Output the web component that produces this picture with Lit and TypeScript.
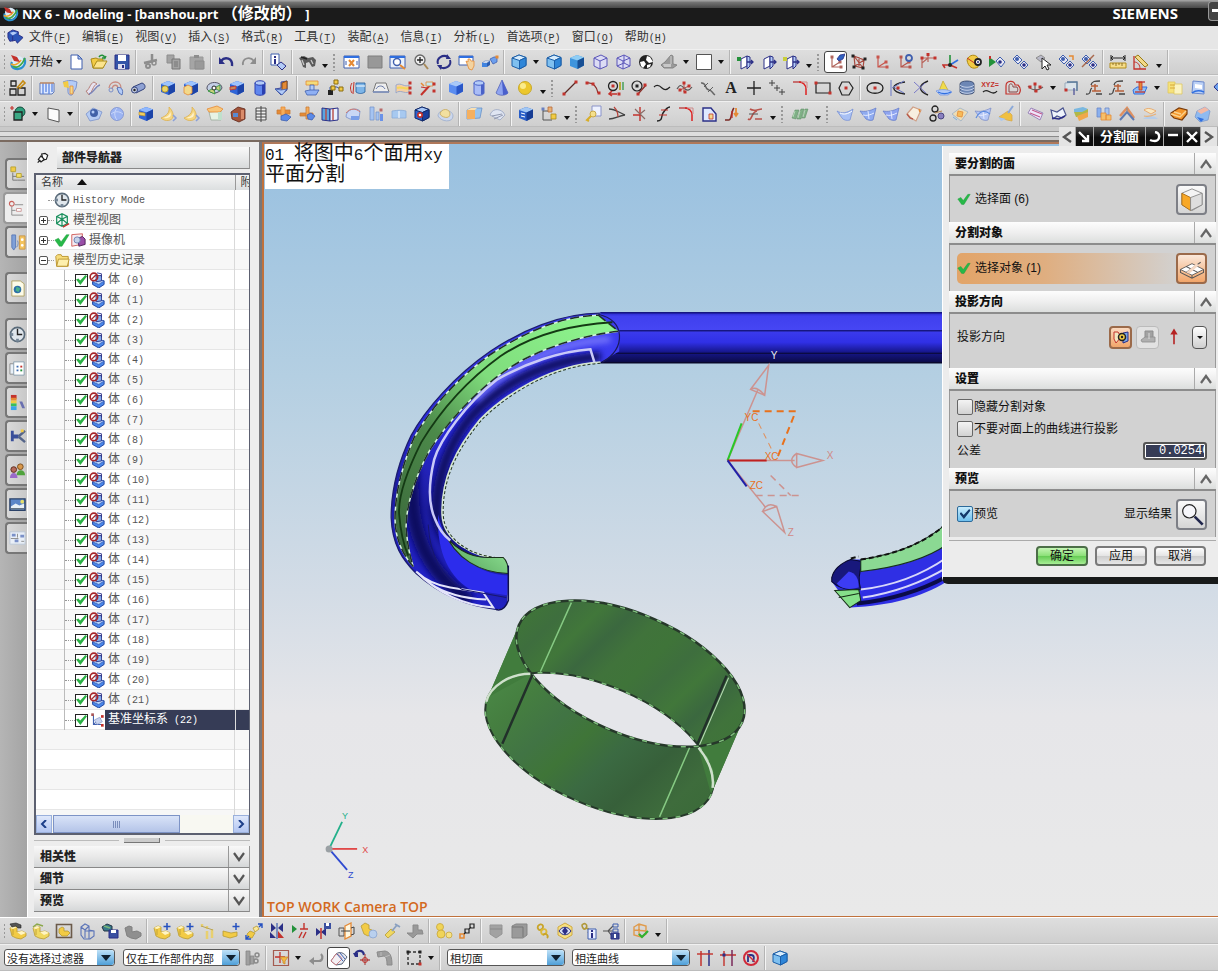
import { LitElement, html, css, svg, nothing } from "lit";
import { customElement, property } from "lit/decorators.js";
import { classMap } from "lit/directives/class-map.js";

/* ---------- icon drawing helpers (18 x 18 grid) ---------- */
const R = "#c3322c", B = "#2f6fe0", Y = "#f2cb45", K = "#222", G = "#23913a", L = "#b3cbf7",
  N = "#2b2f86", O = "#e58a35", A = "#8d8d8d", W = "#fff", D = "#3f5fae";

const p = (d: string, fill = "none", stroke = "none", w = 1) =>
  svg`<path d=${d} fill=${fill} stroke=${stroke} stroke-width=${w}></path>`;
const s = (d: string, stroke = K, w = 1) => p(d, "none", stroke, w);
const c = (x: number, y: number, r: number) =>
  `M${x - r} ${y}a${r} ${r} 0 1 0 ${2 * r} 0a${r} ${r} 0 1 0 ${-2 * r} 0z`;
const cube = (t: string, l: string, r: string, line = "none") => [
  p("M2 5L9 2l7 2.5v8L9.500 16 2 13z", l, line), p("M2 5L9 2l7 2.500L9.500 7.500z", t, line), p("M9.500 7.500L16 4.500v8L9.500 16z", r, line)];
const mini = (x: number, y: number, a: string, b: string) => [
  p(`M${x} ${y + 2}l3-2h5l-3 2z`, W, b, 0.5), p(`M${x} ${y + 2}h5v4h-5z`, a), p(`M${x + 5} ${y + 2}l3-2v4l-3 2z`, b)];
const cyl = (a: string, b: string) => [p("M4 4v10c0 3 10 3 10 0V4z", a, b), p("M11 4v11.500c2-.5 3-1 3-1.500V4z", b), p("M4 4c0-3 10-3 10 0S4 7 4 4z", L, b)];
const dot = (x: number, y: number, k = R) => p(`M${x - 1.500} ${y - 1.500}h3v3h-3z`, k);
const gear = (k: string, e: string) => [
  p("M1 6l4-2 3 1v5l5-1 4 2v3l-5 3-5-1-4-2z", k, e, 0.8), p("M1 6l4-2 3 1-4 2z", "#fff5c4"), p("M8 10l5-1 4 2-5 2z", "#fff5c4"), s("M4 7v6", e, 0.8)];
const grayGear = p("M1 6l4-2 3 1v5l5-1 4 2v3l-5 3-5-1-4-2z", "#8f8f8f", "#808080");
const axes = (k: string) => [s("M5 3v11h10M5 14l8-5", k, 1.200), dot(5, 4, k), dot(14, 14, k), dot(13, 9, k)];
const surf = (k: string, e: string) => [p("M1 6c5 1 10 0 16-3l-3 12c-3 1-5 0-7-1z", k, e, 0.8), s("M4 10c4 1 7 0 11-2M9 6l1 8", "#e4ebff", 1)];
const eye = (k: string) => [p("M2 6l4-4 5 5-4 4z", "#e8e8f4", D), p(c(6, 6, 2), D), p("M9 12l4-4 4 4-4 4z", "#e8e8f4", D), p(c(13, 12, 1.800), N), s("M12 3h4v4", k, 1.500)];
const wall = (k: string) => [p("M5 6l6-3v10l-6 3z", W, N), p("M11 3l3 1v9l-3 3z", L, N), s("M11 9h6M15 7l2 2-2 2", N, 1.300), p("M1 4h4v4H1z", k)];

const ICONS: Record<string, unknown> = {
  nx: [p(c(9, 9, 6), "#dcecf8"), s("M15 5c3 5-1 12-8 11C2 15 2 11 3 9", "#2a8fd0", 2.200), s("M4 13c5 4 10-3 12-8", "#45a845", 1.800), s("M2 11c3 2 8 0 10-4", "#f0a52a", 1.600), p("M2 2l6 2 3 5-6-1z", R)],
  nxs: [p("M1 4l5-3 6 2v3l5 3-6 6-2-3-6 1-2-4z", "#2c55b8", N), p("M3 4l4-1 4 1-5 3z", L), s("M6 7v6", N)],
  new: [p("M4 2h7l4 4v10H4z", W, D), p("M11 2v4h4z", L, D)],
  open: [p("M1 6l5-1 2 1h5v9H3z", Y, "#a88a1a"), p("M3 15l4-7h10l-4 7z", "#fbe48d", "#a88a1a"), s("M9 4c2-3 5-2 6 1l1-2M15 5h-3", G, 1.500)],
  save: [p("M2 2h14v14H2z", "#3555a8", N), p("M5 2h8v6H5z", W), p("M5 11h7v5H5z", "#dde"), p("M9 12h2v3H9z", N)],
  cut: [s("M10 1v9M2 10l13-3", A, 2.500), s(c(6, 13, 2), A, 2), s(c(12, 10, 2), A, 1.500)],
  copy: [p("M2 2h7v8H2z", "#a3a3a3", A), p("M7 6h8v10H7z", "#a3a3a3", "#777"), s("M9 9h4M9 11h4M9 13h4", "#777")],
  paste: [p("M2 4h13v12H2z", "#a5a5a5", "#999"), p("M6 2h5v3H6z", A), p("M7 8h9v8H7z", "#999", A)],
  undo: [s("M4 8c4-5 12-3 11 5", N, 2.400), p("M2 4v7h6z", N)],
  redo: [s("M14 8C10 3 2 5 3 12", A, 1.800), p("M16 4v7h-6z", A)],
  info: [p("M2 1h8v11H2z", W, D), p("M5 3h2v2H5zM5 6h2v5H5z", N), p("M8 12l4-3 5 4-4 4z", L, N)],
  find: [p("M1 5l5-2 4 2 5-1 3 3-1 6-3 1-3-5-3 1 0 5-3-1-2-6z", "#5a5a5a"), s("M4 7l2 5M13 7l2 4", "#c8c8c8", 1.300), s("M3 4l6 2", K, 1.500)],
  fit: [p("M1 3h15v12H1z", W, D), p("M1 3h15v2H1z", B), s("M6 7l5 6M11 7l-5 6", O, 2), s("M3 8v4M14 8v4", D)],
  gray: [p("M2 3h14v12H2z", "#989898", "#7f7f7f")],
  zoomfit: [p("M1 3h15v12H1z", "#eaf1fb", D), p("M1 3h15v2H1z", B), p(c(8, 9, 3.500), W, D, 1.400), s("M11 12l5 4", O, 2)],
  zoom: [p(c(8, 7, 5), "#eee", "#666", 1.300), s("M5 7h6M8 4v6", K, 1.300), s("M12 11l4 5", "#a88a5a", 2)],
  rotate: [s("M3 11C1 5 8 1 13 4M15 7c2 6-5 10-10 7", N, 2), p("M12 1l4 5h-5zM6 17l-4-5h5z", N)],
  pan: [p("M1 3h14v9H1z", W, D), p("M1 3h14v2H1z", B), p("M8 8l2 1V6h2l1 2 3 0v5l-2 4-3-1z", "#f3d3a0", O, 0.800)],
  persp: [...mini(1, 8, "#3f83e0", "#2a5cb0"), p("M9 6l4-2h3v5l-4 2z", "#6c9fee", D, 0.800), dot(16, 4, O)],
  cubeB: cube("#d7ecfc", "#7fc0f0", "#2f86d8", "#1b5ea8"),
  cubeS: cube("#a9c9f8", "#5b8df0", "#2a57c8"),
  solid: cube("#8fcdf5", "#3f95dd", "#174f94"),
  wire: [p("M3 5l7-3 6 3v8l-7 3-6-3z", "#dcdcf4"), s("M3 5l7-3 6 3v8l-7 3-6-3zM3 5l6 3 7-3M9 8v8", "#5a55b8", 1)],
  wire2: [p("M3 5l7-3 6 3v8l-7 3-6-3z", "#dcdcf4"), s("M3 5l7-3 6 3v8l-7 3-6-3zM3 5l6 3 7-3M9 8v8M10 2v8l-7 3M10 10l6 3", "#5a55b8", 1)],
  yin: [p(c(9, 9, 7), K), p("M10 3l3 1 3 5-4 1-3-3z", W), p("M3 9l4-1 2 3-3 4-2-2z", W), p("M10 12l4-1-1 3-3 1z", W)],
  section: [p("M5 9l6-7 2 1v8l4 1-4 3H4l-3-3z", "#9a9a9a", "#858585"), p("M3 11h8v3H4z", "#c8c8c8"), s("M11 3v8", "#ccc")],
  square: [p("M1.500 1.500h15v15h-15z", W, "#555")],
  clip1: wall(G), clip2: wall("none"), clip3: wall("#c9cf3a"),
  csysSet: [...axes("#b0655c"), p("M10 6l3-4 5-1-2 5-4 2z", "#2f62c0", N, 0.800)],
  csysDots: [s("M4 3l10 4-1 8-8-2zM4 3l9 12M14 7L5 13M9 4v9", "#a84a40", 1.200), dot(3, 3, K), dot(15, 6, K), dot(13, 15, K), dot(4, 14, K)],
  csys: axes("#c8554c"),
  csysRot: [...axes("#b8554c"), s(c(13, 5, 3), D, 1.800)],
  csysDir: [s("M3 15V5h13M9 1v8M3 10l6-5", "#b9655c", 1.200), dot(3, 5), dot(9, 1.500), dot(16, 5)],
  csysRgb: [s("M8 2v11", G, 1.600), s("M8 12l8-5", B, 1.600), s("M8 12H1l2 3M8 12l7 3", R, 1.600), p(c(8, 12, 2), K)],
  ball: [p("M2 7c2-6 9-6 11-2v9c-5 3-10 0-11-7z", Y, "#b08a10"), s("M2 5l9 6", R), p(c(13, 9, 3), W, K, 1.800), p(c(13, 9, 1), N)],
  play: [p("M1 4l7 5-7 5z", G), s("M2 3v3", R, 2), p("M8 8l4-4 5 5-4 5z", "#e8e8f4", D), p(c(12, 9, 1.800), N)],
  eye1: eye("none"), eye2: eye(O), eye3: [...eye("none"), s("M2 14l12-12", "#a8684c", 1.400)],
  eyePtr: [p("M2 5l5-3 4 3-4 4z", "#b9b9c8", A), p("M8 5v11l3-3 2 4 2-1-2-4h4z", W, K)],
  measure: [s("M2 2v6M16 2v6M2 5h14M4 3L2 5l2 2M14 3l2 2-2 2", K), p("M1 10h16v5H1z", "#f6dd8a", "#b38d1c"), s("M4 10v2M7 10v3M10 10v2M13 10v3", "#7a5c14", 0.8)],
  angle: [s("M2 3v13h12", R, 1.300), p("M3 4l3-2 10 10-3 2z", "#f3d98a", "#9a7c14"), s("M2 9c4 0 6 3 6 7", R)],
  sketch: [s("M2 2h5v5H2zM1 10h6v6H1zM9 9h7v7H9z", K, 1.300), s("M8 9l6-7 2 2-6 6", "#c78b10", 1.600)],
  extrude: [p("M2 4h14v9l-2 2H2z", "#dfe9ff", D, 0.800), s("M5 4v11M8 4v9M11 4v11M14 4v9", "#5b86e0", 1.300), s("M2 4h14", O)],
  revolve: [p("M2 3c5-2 9-2 14 0l-1 6-4 7c-5 1-4-5-4-7z", L, "#7a92cc"), p("M2 3l5-1 1 7-5-1z", Y), p("M9 7h3v8H9z", "#f3d98a", O, 0.8)],
  sweep: [p("M2 12c3 0 4-8 8-9l6 3c-5 0-6 9-10 10z", "#e6e2f0"), s("M2 12c3 0 4-8 8-9l3 2c-4 1-5 9-8 11z", "#b58078"), s("M5 15c5-1 6-8 11-9", "#7b86b8", 1.300)],
  tube: [s("M2 9c1-8 12-8 12 0M5 10c1-5 6-5 6 0", "#c88a80", 1.300), s(c(4, 11, 2), "#7b8fc8"), p("M10 9c4-2 7 2 5 7l-3-2z", L, D, 0.800)],
  pipe: [p("M3 8l9-4c3 1 4 4 2 6l-8 4z", "#8fa2d4", "#33437c"), p(c(4.500, 11, 3), "#c4cde4", "#33437c"), p(c(4.500, 11, 1.200), K)],
  cubeY: [...cube("#9cc4ff", "#2f65d8", "#1c44a8"), p(c(6, 10, 3.200), "#ecd66a", "#a88a1a", 0.800)],
  cubeY2: [...cube("#9cc4ff", "#2f65d8", "#1c44a8"), p("M2 8l4-2 4 2v6l-4 2-4-2z", "#f3d98a", O, 0.8)],
  disk: [p("M2 10C1 2 16 1 17 9c-3 6-11 7-15 1z", "#c4cfe6", "#556"), p("M9 9l6-3v6zM9 9l-6 3 7 3z", "#c9d27a", G, 0.800), p(c(9, 9, 2), W, K)],
  cubeO: [...cube("#9cc4ff", "#2f65d8", "#1c44a8"), p("M2 8l6-1v3l-6 1z", "#c98a5a", R, 0.8)],
  cyl: cyl("#5f86ee", "#2a3fb0"),
  corner: [p("M1 10l6-1V3l6-1v9l-6 5z", "#7b9be6", N, 0.800), p("M8 4l5-2v8l-5 3z", O, "#8a4d14"), p("M1 10l6 1 6-1-5 6z", L, D, 0.800)],
  pad: [p("M3 2h12v4H3z", "#f3dc7a", O, 0.800), p("M7 6h4v6H7z", L, D, 0.800), p("M2 12l5-1h9l-3 5H4z", "#8fb0f4", D, 0.800)],
  cubes: [s("M4 14V8h7l4 3", D), p("M8 1h4v4H8z", Y, "#8a6d10"), p("M2 11h5v5H2z", K), p("M13 8h4v4h-4zM5 7h4v4H5z", Y, "#8a6d10")],
  slab: [s("M3 4c-2 3-2 7 0 10M5 3l-1 12", R), p("M7 4h9v9c-3 2-6 2-9 0z", "#7db5e8", "#1e5a9a", 0.800), s("M7 7h9", W)],
  trap: [p("M4 4h10l3 9H1z", "#eee", "#777"), s("M4 10c2-4 7-4 9 0", "#6a7aa8"), s("M1 13h16", "#7a8fc0", 1.500)],
  band: [p("M1 6c5-3 9 3 13 0v7c-5 2-9-3-13 1z", "#f6cfa4", "#8aa0cc", 0.800), s("M2 9c5-2 8 2 12 0", "#f4d65a", 2), dot(15, 4), dot(15, 9), dot(15, 14)],
  hook: [s("M3 16L14 4", R, 2), s("M3 8l6 1", R, 1.200), p("M8 3h7v4H8z", "#bfe8f2", O, 0.800), dot(16, 5), dot(16, 12), s("M3 4l3 3", O, 1.500)],
  cone: [p("M9 1l6 13c-3 3-9 3-12 0z", "#8fa4f0", "#5565b8", 0.800), p("M9 1l6 13c-1 1-3 2-5 2z", "#4a60cc")],
  cylL: cyl("#a9bcf6", "#4a62c8"),
  sphere: [p(c(9, 9, 6.500), "#ecc72c", "#c8aa2c"), p(c(7, 7, 3), "#faeb8a")],
  line: [s("M3 15L15 3", "#5a2a24", 1.300), dot(3, 15), dot(15, 3)],
  arc: [s("M3 4c6-1 10 4 11 10", "#8a2f2a", 1.400), dot(3, 4), dot(9, 5), dot(15, 14)],
  circs: [s(c(6, 7, 4.500), K, 1.300), dot(6, 7), s("M2 15h8M5 12l-3 3 3 2", R, 1.500), s("M13 3v8", "#b8a83a", 2), s("M16 3v8", G, 1.200), dot(12, 15)],
  circl: [s(c(7, 7, 5), K, 1.200), s("M8 15l8-9", "#8a2f2a", 1.400), dot(15, 6), dot(8, 15), dot(7, 7, K)],
  wave: [s("M1 8c3-3 6-1 8 1s5 2 8-1", K, 1.200)],
  studio: [s("M1 10c3-5 4-4 7-1s5 3 8-1", "#555", 1.200), s("M8 4v9M4 11l9-4", "#b8524c"), dot(8, 4), dot(4, 11), dot(13, 7), dot(9, 13)],
  scurve: [s("M2 4c6-1 3 6 8 7 3 0 3 3 6 5", "#666", 1.400), s("M5 8l4-4M9 13l5-5", "#444", 0.800)],
  letter: svg`<text x="9" y="14" text-anchor="middle" font-family="Liberation Serif, serif" font-weight="700" font-size="16" fill="#222">A</text>`,
  plus: [s("M9 2v14M2 9h14", K, 1.300)],
  points: [s("M4 1v6M1 4h6M9 6v6M6 9h6M14 10v6M11 13h6", "#444", 1)],
  fillet: [s("M2 3h8", "#b33", 1.300), s("M8 3c4 0 7 3 7 7v6", "#d22", 1.500), s("M10 3h6v6", "#c88", 1)],
  rect: [s("M2 4h14v10H2z", K, 1.200), dot(2, 4), dot(16, 14)],
  poly: [s("M5 3h7l4 6-4 7H5L2 9z", K, 1.200), dot(9, 9)],
  ellipse: [s("M1 9c0-7 16-7 16 0s-16 7-16 0z", K, 1.300), dot(9, 9)],
  parab: [s("M16 3C1 5 1 13 16 15", K, 1.400), s("M2 1v16M3 9l12-7M6 9l9 5", "#6a78c8"), dot(9, 9)],
  hyper: [s("M16 2C6 6 6 12 16 16", K, 1.400), s("M2 3l12 11M2 14L13 4", "#7a7ac8", 1)],
  helix: [p("M4 12l4-10 6 11z", "#f0dc4a", "#c4a83a", 0.800), p("M1 12c4-2 12-2 16 1l-4 3H5z", L, "#7a98e0", 0.800), s("M3 13c4 2 9 2 13 0", B, 1.200)],
  coil: [p("M2 5c0-4 14-4 14 0v8c0 3-14 3-14 0z", "#6d87b5", "#2d3f66", 0.800), s("M2 6c3 3 11 3 14 0M2 9c3 3 11 3 14 0M2 12c3 3 11 3 14 0", "#c5d2ea", 1)],
  xyz: [svg`<text x="9" y="8" text-anchor="middle" font-family="Liberation Sans, sans-serif" font-weight="700" font-size="7" fill="#c3322c">XYZ=</text>`, s("M2 13c3-3 5-1 7 0s5 2 7-1", K, 1.300)],
  offset: [s("M2 15V7c0-6 9-6 9-1h3c3 3 3 6 1 9z", R, 1.200), s("M5 13V7c0-3 4-3 4 1h4c1 2 1 3 0 5z", "#844")],
  joint: [s("M1 7c4 5 10 5 15 1M8 4v9", "#666", 1.200), dot(3, 8), dot(9, 12), dot(8, 5), dot(13, 8)],
  proj: [p("M3 4l12-1v8H3z", "#dbe4ea", "#9ab"), s("M5 3h10v9", "#5a7a9a", 1.400), s("M12 9v7", N), dot(4, 11)],
  inter: [s("M1 15c6 1 3-5 6-6M15 2c-5 0-8 0-9 4M11 15h6", "#444", 1.300), s("M10 5v7M6 7h7M7 12h9", "#b8603a", 1.500)],
  tower: [p("M2 11l4-3h10l-3 7H3z", "#8fc0f5", B), p("M8 3h3v8H8z", O, R, 0.800), s("M4 13h10", R, 1.300), s("M5 3h9", R, 1.300)],
  layers: [p("M2 3h7v11H2z", "#f6e27a", "#e0c860", 0.800), p("M8 5h8v10H8z", "#fbf3c0", "#e0c860", 0.800), s("M4 6h5M4 9h5", "#d8a83a")],
  doc: [p("M4 2l11 1v12l-12-1z", "#bcd1f6", "#6a88cc"), p("M6 5l7 1v4l-7-1z", W), s("M3 14c4-3 7-3 12-1", B, 1.500)],
  more: [p("M2 8c4-6 10-6 13 0l-6 7z", "#6aa0ee", N)],
  boolean: [p(c(11, 7, 5), "#2e9f7c", "#134a3a"), p("M5 7h8v8H5z", "#3aa884", K, 1.300), s("M1 3h4M3 1v4", R, 1.200)],
  plane: [p("M4 3l11 2v12L4 14z", "#fbfbfb", "#555")],
  disc: [p("M1 9l7-6 9 4-3 7-9 2z", "#b5cbf3", "#7a92cc", 0.800), p(c(9, 8, 4), "#4060a8"), p(c(8, 7, 1.500), L)],
  orb: [p(c(9, 9, 6.500), "#9cb4f2", "#7a8fd0", 0.800), s("M3 9c4-3 8-3 12 0M9 3c-3 4-3 8 0 12", "#c8d6fa", 1)],
  block: [...cube("#8fb8ff", "#2f65d8", "#1c44a8"), p("M2 7l6 1 0 3-6-1z", "#f0d060", "#c1912a", 0.600)],
  horn: [p("M9 2c1 6-3 9-8 11 4 4 11 3 12-1 1-4-2-8-4-10z", "#f5d680", "#dcb050", 0.800), p("M3 13c4-1 7-3 7-6 2 3 1 7-7 6z", "#fdf1cc"), s("M13 10l3 3-3 3", "#8aa0d8", 1.500)],
  boxT: [p("M3 7l12-1v9H5z", "#e7f3e4", "#9aaa9a", 0.800), p("M1 4l10-3 6 3-3 3H3z", "#f8c77a", O, 0.800), p("M12 7h4v8h-4z", "#bfe0cc")],
  clamp: [p("M2 7l7-5 7 2v10l-6 3-7-3z", "#a2543a", "#5f2517", 0.800), p("M4 8h5v4H4z", "#5a8ad0"), p("M12 5h3v9h-3z", "#d98b6a")],
  rings: [p("M4 2h10v14H4z", "#eee"), s("M4 3h10M4 6h10M4 9h10M4 12h10M4 15h10M9 1v16M4 3v12M14 3v12", "#444", 1)],
  crossO: [p("M2 5h13v4H2z", O, "#c87c38", 0.800), p("M6 2h4v9H6z", "#f6ac5a", O, 0.800), p("M6 11l5-2 5 3-4 4-6-1z", "#5b8ae8", D, 0.800)],
  crossB: [p("M2 8h13v3H2z", O, "#c87c38", 0.800), p("M8 2h3v12H8z", "#f6ac5a", "#c87c38", 0.800), p("M9 10l4-2 4 3-3 4-4-1z", "#5b8ae8", D, 0.800)],
  book: [p("M1 3l8 1v12l-8-1z", "#5ba5e0", N), p("M17 3L9 4v12l8-1z", "#e8f0ff", N), s("M5 4v11M12 4v11", "#b84a44", 1.400)],
  shell: [p("M2 12C2 4 12 2 16 6l-1 8H6z", "#c9d7f5", "#7a8fc8", 0.800), s("M2 8c4-5 10-5 14-1", "#d07a70"), p("M7 11h8v4H7z", "#7a9ee8")],
  cols: [p("M3 2h4v13H3z", "#a5c4f2", "#7a98cc", 0.800), p("M9 7h3v8H9z", "#a5c4f2", "#7a98cc", 0.800), p("M13 9h3v7h-3z", "#6a92e8"), dot(14, 5, "#b86a6a")],
  pill: [p("M2 6c6-1 10-1 14 0v7H2z", "#a7c9f0", "#8aacd8", 0.800), s("M9 6v7", W)],
  mark: [...cube("#a8c8f8", "#2b62cf", "#1a3f9c", "#122a6a"), p(c(7, 10, 3), R), p(c(7, 10, 1.300), W)],
  disc2: [p("M2 11c0-8 15-7 15 0s-12 6-15 0z", "#ccd8ee", "#9aaccc", 0.800), p("M4 9c1-6 10-6 10 0s-9 3-10 0z", "#f2e0a0", "#c8a85a", 0.8)],
  brick: [p("M2 5l4-2h11l-2 10-13 1z", "#9ac4ee", "#6a92c8", 0.8), p("M2 5h8v9H2z", "#f5b060"), p("M2 5l4-2h6l-2 2z", "#fbe0b0")],
  ghost: [p("M2 10c2-6 8-7 13-3l2 3-5 5z", "#dfe5f2", "#98a4c0", 0.800), s("M4 11l10-2M6 14l9-4", "#8890a8", 0.900)],
  cubeN: [...cube("#a2c8f5", "#2a5fc8", "#173c93"), s("M4 8l4 1M4 11l4 1", "#fff")],
  tree: [s("M3 3v12h9M3 6h5", "#555"), p("M8 2h4v5H8z", "#e8b074", "#b86a3a", 0.800), p("M11 9h5v5h-5z", Y, "#a88a1a", 0.800), dot(3, 4, "#6a80c0")],
  key: [p("M7 1h9v10H7z", "#eef2ff", "#8a93c8"), p(c(8, 9, 3), "#f5e08c", "#c8a84a"), s("M6 11l-4 4 2 1", "#d8ae28", 2)],
  trim: [s("M1 4c6 0 9 3 16 6M1 14c6 0 9-3 16-4", "#444", 1.300), s("M6 2c3 3 4 6 4 10", "#b8423a", 1.200)],
  tick: [s("M9 2v14M2 10h8", R, 1.400), s("M4 4l10 10M9 9l5-4", "#8a6a64", 1.200)],
  bend: [s("M3 16c6 0 4-5 6-8s4-6 7-6", K, 1.400), s("M5 10h8M7 5h7", R, 1)],
  sheet: [p("M3 3h8l5 6v7H3z", "#dfe9ff", N, 1.400), p("M9 9h4v5H9z", "#f3d98a", R, 0.800)],
  stair: [s("M2 15h4c3 0 2-9 5-12", "#7a2a24", 1.700), s("M13 3v8M11 8l2 3 2-3", O, 1.800), s("M9 13V6", R, 1.300)],
  spin: [s("M4 4c4 3 8 0 12 0M2 14c4 3 3-7 9-8M9 14h7", "#b8524a", 1.600), s("M3 9h9", "#555")],
  greens: [p("M1 13l3-8h4l-3 9zM6 14l4-10h3l-3 10zM11 13l3-9h3l-3 9z", "#7fb086", "#5a8a60", 0.5), s("M4 6l-2 6M9 6l-2 7M14 5l-2 7", "#b5d6b8")],
  sf1: [p("M1 6c5 3 10 2 16-2l-3 11c-3 1-7 0-8-2z", "#a8c0f4", "#7a92d4", 0.8), s("M4 8c4 2 8 1 12-2", W)],
  sf2: surf("#8fabf0", "#6a80cc"), sf3: surf("#8fa4f0", "#6a80cc"),
  diamond: [p("M2 9l6-7 8 3-5 11-5-3z", "#f7efe0", "#cfa088", 1.200), s("M2 9l3 4 3 1", "#b85a4a", 1.400), s("M14 4l1 3", O, 1.500)],
  loops: [s(c(7, 4, 3), K, 1.300), s(c(5, 13, 3), K, 1.300), p(c(13, 11, 3), "#8a80c0", "#4a4680"), s("M7 8l7-2", "#b88a5a", 1.300)],
  patch: [p("M1 9l8-6 8 4-7 9z", "#eeddb4", "#9ab0c8", 0.800), p("M7 6l5 1-1 5-5-1z", "#f6bb58", O, 0.800), s("M2 12l4 3", "#7ab0d8")],
  net: [...surf("#b5c6f5", "#8090c8"), s("M2 13c4-8 9-8 14-4", "#5b8ae0", 1.200)],
  broom: [p("M2 12l9-6 4 4v6l-5-1z", "#f0c040", "#d8a84a", 0.800), s("M11 8l5-7", "#8aa8d8", 2), p("M1 12l8 2-5 2z", "#a8c8f0")],
  roll: [p("M2 8l3-5 12 5-3 7z", "#eee4fa", "#9a86b8", 1), s("M4 8l10 4M6 5l10 4", "#c05a8a", 1.100)],
  wing: [p("M2 5l6 2 6-4 3 7-4 3-5-2-4 3z", "#eef3fb", "#4a5490", 1.200), s("M3 13l7 1 6-3", N, 1.500)],
  stack: [p("M2 4l9-2 5 2-3 3H2z", "#7ab8e0"), p("M2 7h8l6-3v4l-5 4H4z", "#b0b848"), p("M5 11l11-4v5l-9 4z", "#f0a84c")],
  posts: [p("M2 3h4v9H2z", "#8ab0ee", "#6a88c8", 0.800), p("M10 3h4v7h-4z", "#a8c4ee", "#6a88c8", 0.800), p("M6 8h5v7H6zM11 10h5v5h-5z", "#f5c06c", O, 0.800)],
  roof: [s("M2 11l7-8 7 10", "#e09060", 2.500), s("M2 15l7-8 7 8", "#5f7ab0", 2), s("M9 3v4", A)],
  dune: [p("M3 5c4-3 8-1 12 1l-5 3z", "#f8e8c4", O, 0.600), p("M2 14c4-4 11-4 15 0z", "#b5cdea"), s("M3 11c4 1 8 0 12-2", "#e8b074", 1.200)],
  gold: [p("M1 8l8-5 8 2v4l-5 6-8-2-3-3z", "#f3952a", "#7c3c0a", 1.200), s("M1 9l9 3 6-6M4 7l7 2", "#fbd28e", 1.500)],
  blueS: [p("M4 6l8-4 5 4-2 9-8 2-5-5z", "#8fbaf0", "#7a98cc", 0.800), p("M4 6l8-4 4 3-8 4z", "#f2b9a6"), p("M4 12l7 2-3 3z", B)],
  as1: [...gear(Y, "#b89a34"), p("M1 2l6-1 5 2 0 3-3 0-2-2-4 1z", "#555", K, 0.600)], as2: [...gear("#f0d860", "#b89a34"), s("M1 5l4-3 6 2", "#8aa84a", 1.400)],
  as3: [s("M1.500 2.500h15v13h-15z", "#6b5a4a", 1.600), p("M4 7l3-2 2 1v3l4 0 2 2-3 3-5 0-3-3z", Y, "#b89a34", 0.800)],
  as4: [s("M3 5l4-3 4 2v4l5 1v5l-4 3H6l-3-4zM3 5l4 3v8M7 8l4-4M7 9h9M11 8v9", "#5b74b8", 1.100)],
  as5: [p("M1 5l5-3 5 2v5H3z", "#3a7a8a", "#234"), p("M8 8h9v8H8z", "#3a4fa0", N), p("M10 8h5v3h-5z", W), s("M3 4l6 2", "#7ab87a", 1.500)],
  asG: grayGear,
  asPlus: [...gear(Y, "#b89a34"), s("M14 1v7M10.500 4.500h7", "#2450c0", 1.500)],
  asDots: [s("M3 2v3M8 4v3M8 9v8M13 7v9", "#e8d070", 2.500), s("M2 4l12 4", "#b8a45a")],
  asFlat: [p("M1 9l8 2 6-1v4l-7 2-7-2z", Y, "#b89a34", 0.800), s("M14 1v7M10.500 4.500h7", "#2450c0", 1.500)],
  asMove: [p("M2 12l3-3 5 2-3 5-4-1z", Y, "#b89a34", 0.800), p("M8 6l4-2 2 3-4 3z", "#fbe99a", "#b89a34", 0.800), s("M13 2h4v4M1 13v4h5M17 2l-3 3M1 17l3-3", "#2450c0", 1.400)],
  mate: [p("M3 1l5 5-5 4zM15 1l-5 5 5 4z", N), s("M9 1v16", D, 1.200), p("M10 9l6 7h-6z", R), p("M2 10l6 6H2z", N)],
  cons: [p("M1 3l5 4-5 4z", G), s("M9 7h8M13 1v6M8 16l3-6M12 16l3-6", R, 1.400)],
  savem: [p("M2 6l5 4-5 4zM12 6L7 10l5 4z", N), s("M7 6v11", R, 1.500), p("M10 1h7v6h-7z", "#3a4fa0"), p("M12 1h3v3h-3z", W)],
  mir: [s("M2 6h5v8H2z", "#555"), p("M8 4l6-3v13l-6 3z", "#fff7e0", O, 1.300), s("M14 6l3-1v7l-3 1M4 9h9", "#444")],
  wav: [p("M1 4l4-3 4 2v4l3 1v4l-4 2-4-2z", Y, "#b89a34", 0.800), p(c(13, 12, 4), "#b9d0ee", "#8aa4d0", 0.800)],
  wr: [p("M2 13l6-6 4 3-7 6z", "#f0d860", "#b89a34", 0.800), s("M9 9l5-6M12 2l5 3", "#8aa0c0", 1.800)],
  gq: [p("M1 11h6V3h5v5h4l1 4-6 0-4 4z", "#999", "#8a8a8a")],
  blobs: [p(c(5, 5, 3.500), "#f0d458", "#c8a63a", 0.800), p(c(6, 12, 4), "#f0d458", "#c8a63a", 0.800), p(c(14, 13, 3), "#f6e286", "#c8a63a", 0.800)],
  chain: [s("M2 12h4v4H2z", O, 1.600), s("M7 7h4v4H7zM12 2h4v4h-4zM6 12l2-2M11 7l2-2", K, 1.200)],
  shield: [p("M3 3h12v9l-6 4-6-4z", "#a2a2a2", "#959595"), s("M3 7h12", "#888")],
  grayD: [p("M2 4l4-2h11v11l-4 3H2z", "#9a9a9a", "#858585"), s("M2 5h11v10", "#777")],
  link: [s("M5 4c3-4 7 0 4 3s-5-1-4-3z", "#c8a428", 1.800), s("M9 8c4-3 6 2 3 4s-5-2-3-4z", "#dcba3a", 1.800), s("M10 13c3-3 6 1 4 3", "#c8a428", 1.800)],
  hexo: [p("M9 1l7 4v8l-7 4-7-4V5z", "#f6df80", "#d0aa40"), p("M3 9c3-5 9-5 12 0-3 5-9 5-12 0z", "#d5dcf0", N), p("M9 5l3 4-3 4-3-4z", N)],
  linki: [s("M3 3c3-3 6 0 4 3s-4-1-4-3zM6 7c3-2 5 1 3 4", "#b0983a", 1.600), p("M9 7h8v10H9z", "#e9edff", D), p("M12 8h2v2h-2zM12 11h2v5h-2z", N)],
  node: [s("M1 9h5M6 9l5-5M6 9h5M6 9l4 5", "#555", 1.200), s("M11 2h5v3h-5zM11 7h5v3h-5z", D), p("M9 11h8v6H9z", "#3a4a90", N), p("M12 12h2v4h-2z", W)],
  check: [s("M3 5l5-3 7 2v8l-5 3-7-2zM8 2v11M3 8l12 1", "#e09a4a", 1.400), s("M8 12l3 3 6-6", "#30b030", 2.200)],
  gearG: [p("M3 2h4v14H3zM7 7h4v8H7z", "#a0a0a0", "#858585", 0.800), s(c(14, 6, 2), "#8a8a8a", 1.500), s(c(13, 12, 2), "#8a8a8a", 1.500)],
  snap: [s("M1.500 1.500h15v15h-15z", "#a35b50", 1.200), s("M8 3v11M3 8h10", R, 1.300), p("M8 8h8l-3 4v3l-2-1v-2z", "#f4b942", "#c88a2f", 0.800)],
  ret: [s("M6 12h6c4 0 4-5 2-7", A, 2.200), p("M7 8v8l-5-4z", A)],
  eraser: [p("M1 12l5-7c4-3 8-1 11 3l-5 7-6 1z", "#e7ebf4", "#5a6478"), p("M1 12l5-7c3 0 5 3 6 5l-6 6z", "#f4f0f4", "#c86a70", 0.800), s("M7 5l6 7M10 4l5 6", D)],
  curl: [s("M2 6c1-5 8-6 9 0", N, 2.200), p("M0 4h5v4H2z", N), s("M12 5v11M7 11h10", "#a55", 1.300), s(c(12, 11, 2.500), R)],
  hookG: [p("M1 3l8-1c5 1 7 5 7 14h-5c0-6-1-8-3-9l-6 1z", "#9d9d9d", "#8a8a8a"), s("M5 3v4M9 8l5-2", "#bbb")],
  marq: [svg`<path d="M3 3h12v12H3z" fill="none" stroke="#333" stroke-width="1.400" stroke-dasharray="3 2"></path>`, dot(3, 3, K), dot(15, 15), dot(15, 3, K)],
  hash: [s("M5 2v15", R, 1.500), s("M13 1v16", N, 1.500), s("M1 5h16", R, 1.400)],
  hashY: [s("M5 2v15M1 6h16", R, 1.400), s("M13 1v16", "#7a2a5a", 1.500), dot(5, 6, N)],
  noent: [s(c(9, 9, 7), "#d02a3a", 2), s("M6 13V6h3c4 0 3 4 2 7", N, 1.800), s("M5 5l8 8", "#d02a3a", 1.400)],
  tabTree: [p("M2 1h5v5H2z", Y, "#b8a434"), s("M4 7v8h5M4 11h12", "#777"), p("M8 8h5v4H8z", "#f7e268", "#b8a434"), s("M9 15h8", "#777")],
  tabPart: [s(c(4, 4, 2.500), "#c8605a", 1.200), s("M4 7v9h12M4 11h4M7 5h9", A), p("M9 9h5v3H9z", W, "#c99")],
  tabHist: [p("M3 1h4v13l-2 3-2-3z", "#7fa0d8", "#5a7ab8"), s("M8 14c2-2 2-5 1-7", "#6a88c0"), p("M11 2h6v14h-6z", "#f3c35d", "#c8964a"), p(c(14, 6, 1.500), W), p(c(14, 12, 1.500), W)],
  tabWeb: [p("M3 1h9l4 3v13H3z", "#fdfbe8", "#b0a468"), p(c(9, 10, 4), "#2d6fa8"), p("M8 7l4 2-2 4-3-2z", "#4ab08a")],
  clock: [p(c(9, 9, 7.500), "#dfe6ec", "#5a6b7a", 1.800), s("M9 3v6h5", K, 1.500), dot(9, 15, "#789"), dot(3, 9, "#789")],
  tabDoc: [p("M1 4h5v11H1z", "#e8f0f8", A), p("M5 2h11v14H5z", W, "#8aa0b0"), p("M8 6h2v2H8zM8 10h2v2H8z", "#3a6ab0"), p("M12 6h2v2h-2z", R), p("M12 10h2v2h-2z", G)],
  tabCol: [p("M2 1h6v4H2z", R), p("M2 4h6v3H2z", O), p("M2 7h6v3H2z", Y), p("M2 10h6v3H2z", "#3bbf5a"), p("M2 13h6v4H2z", "#3aa5e8"), p("M11 8h3l3 7h-3z", "#6a70b0")],
  tabTool: [p("M2 3h3v11H2zM5 7h5v4H5z", "#3a4f9a"), s("M10 9l7-6M10 9l7 6", "#55658a", 2.500), dot(14, 3, Y)],
  tabUser: [p(c(12, 5, 3), "#d8984c", "#7a4c1c"), p("M8 14c0-7 9-7 9 0z", "#4fa33c"), p(c(5, 8, 3), "#b56a5a", "#5b2a1c"), p("M1 17c0-7 8-7 8 0z", "#9a6ac8")],
  tabPic: [p("M1 3h16v12H1z", "#5b86c8", "#2b4268", 1.500), p("M2 11l5-3 4 2 5-2v6H2z", "#e8f0f6"), p(c(14, 6, 2), "#e8e06a"), p("M2 13h14v1H2z", "#345")],
  tabSys: [p("M1 2h16v13H1z", "#e9eff7", "#bcc8d8"), p("M3 4h4v3H3zM12 5h4v3h-4zM6 10h4v3H6z", "#7a90c8"), s("M9 4v4M2 9h8M13 12h3", A)],
  pin: [p("M7 3l5-1 4 3-2 6-5 1z", W, K, 1.800), p("M6 6l5 5-5 4-4-4z", W, K, 1.800), s("M1 16l4-4", K, 1.800)],
  views: [s("M3 5l6-3 6 3v8l-6 3-6-3zM3 5l6 3 6-3M9 2v14M3 13l6-5 6 5", "#1e9160", 1.400), s("M10 17l7-4", R, 1.500)],
  cam: [p("M2 3l12-1-1 12-11 2z", "#f5eaf0", R, 0.800), p("M9 7l5-2 3 3v6l-7 2z", "#9a4fa8", "#4b2054"), p(c(8, 9, 3.500), "#c4d2ea", "#6a80b0")],
  folder: [p("M2 5l2-2h4l1 2h7v11H3z", "#f6dc7c", "#b8902a"), p("M3 16l2-8h12l-2 8z", "#fdefad", "#b8902a")],
  okay: [p("M1 9l4-2 3 4 6-8 3 0-8 13H6z", "#27b848", "#1a9a38", 0.5)],
  body: [p("M4 11l5-3 8 2v4l-6 4-7-4z", "#4a86e8", "#1a3f9c"), p("M4 11l5-3 8 2-6 4z", "#bcd6fb", "#1a3f9c", 0.600), p("M8 4h6v6l-6 1z", "#86b6f2", N), s(c(5.500, 5.500, 4.200), "#a8262a", 1.900), s("M3 8l5-5", "#a8262a", 1.500), s("M9 1l5 1v4", N)],
  datum: [s("M5 3v11h10M5 14l8-7", D, 1.200), p("M6 9l6-3 3 5-6 3z", "#c8d4f0", "#8a9ac8", 0.800), dot(4, 3, "#a55"), dot(15, 5, R), dot(15, 15, R)],
  fcube: [p("M2 5l7-3 7 3v8l-7 4-7-4z", "#f4f4f4", "#888", 0.600), p("M2 5l6 3v9l-6-4z", "#f8a827", "#a86a10", 0.600), p("M8 8l8-3v8l-8 4z", "#dedede", "#888", 0.600)],
  split: [p("M1 10l8-4 8 4-8 4z", W, "#555", 0.600), s("M1 10v2l8 4 8-4v-2M9 14v2M5 8l8 4M5 12l10-7", "#555", 0.700), p("M5 12l7-6 2 1-7 6z", "#f4d8c4", "none")],
  dir: [p("M2 4h4l3 5-5 6-2-4z", "#f2e6c0", R), p("M11 5l5-1v9l-5 2z", "#7aa6e8", N), p(c(10, 9, 3.500), Y, K, 1.500), p(c(10, 9, 1.200), K)],
  vecG: [p("M6 3h8v9H6z", "#a2a2a2", A), p("M2 12l4-3h10v5H3z", "#b0b0b0", A, 0.800), s("M10 5v6", "#ddd")],
  up: [s("M9 5v10", "#b52222", 1.300), p("M9 2l3 5H6z", "#b52222")],
  mag: [p(c(7, 7, 5), "#f6f6fa", K, 0.900), s("M11 11l6 6", "#20264c", 2)],
};
const icon = (name: string, size = 18) =>
  html`<svg class="icon" width=${size} height=${size} viewBox="0 0 18 18" aria-hidden="true">${ICONS[name] ?? nothing}</svg>`;

/* Chinese runs stay in the sans face, Latin runs use the half-width mono face */
const mixed = (text: string) =>
  text.split(/([\x20-\x7e]+)/).filter(Boolean).map((t) => /[\x20-\x7e]/.test(t) ? html`<span class="lat">${t}</span>` : t);

const shared = css`
  * { box-sizing: border-box; }
  .icon { display: block; flex: none; }
  .lat { font-family: "Liberation Mono", monospace; font-size: 10px; white-space: pre; }
  button { font: inherit; color: inherit; padding: 0; margin: 0; border: 0; background: none; }
`;

@customElement("nx-toolbar")
class NxToolbar extends LitElement {
  /* tokens: "|" separator, ">" drop arrow, ";" overflow arrow, ":" grip, "*name" pressed */
  @property() items = "";
  static styles = [shared, css`
    :host { display: flex; align-items: center; height: 26px; flex: none; overflow: hidden; }
    .tool { display: grid; place-items: center; width: 23px; height: 22px; flex: none; border-radius: 3px; }
    .pressed { background: #fff; border: 1px solid #444; }
    .sep { width: 2px; height: 24px; margin: 0 2px; flex: none; background: linear-gradient(90deg, #b4b4b4 50%, #f4f4f4 50%); }
    .grip { width: 9px; height: 18px; flex: none; background: radial-gradient(circle, #999 1px, transparent 1px) 0 0 / 6px 4px repeat-y; }
    .drop { width: 12px; height: 20px; flex: none; display: grid; place-items: center; }
    .drop::after { content: ""; border: 3px solid transparent; border-top: 4px solid #111; border-bottom: 0; }
    .over { width: 13px; padding-top: 8px; }
  `];
  render() {
    return this.items.split(" ").filter(Boolean).map((t) => {
      if (t === "|") return html`<span class="sep"></span>`;
      if (t === ":") return html`<span class="grip"></span>`;
      if (t === ">") return html`<button class="drop" aria-label="展开"></button>`;
      if (t === ";") return html`<button class="drop over" aria-label="更多"></button>`;
      const on = t.startsWith("*");
      const n = on ? t.slice(1) : t;
      return html`<button class=${classMap({ tool: true, pressed: on })} aria-label=${n}>${icon(n)}</button>`;
    });
  }
}

@customElement("nx-scene")
class NxScene extends LitElement {
  static styles = css`
    :host { display: block; width: 100%; height: 100%; }
    .canvas { display: block; width: 100%; height: 100%; }
  `;
  render() {
    const tones = ["#3f7439", "#3e6e3e", "#41773a", "#3b683f", "#40733b"];
    const stripes = Array.from({ length: 11 }, (_, i) =>
      svg`<stop offset=${i / 10} stop-color=${tones[i % 5]}></stop>`);
    const outer = "M600 314C560 314 520 332 490 352C455 376 425 410 411 436C398 463 391 490 391 518C392 545 402 560 416 574C436 592 462 606 497 610";
    return html`<svg class="canvas" viewBox="264 145 954 771" preserveAspectRatio="xMinYMin slice" role="img" aria-label="模型视图">
      <defs>
        <linearGradient id="wallIn" gradientUnits="userSpaceOnUse" x1="520" y1="640" x2="740" y2="730">${stripes}</linearGradient>
        <linearGradient id="wallOut" gradientUnits="userSpaceOnUse" x1="486" y1="700" x2="716" y2="800">
          <stop offset="0" stop-color="#4a8846"></stop><stop offset=".15" stop-color="#457e40"></stop><stop offset=".3" stop-color="#417444"></stop>
          <stop offset=".42" stop-color="#3f7538"></stop><stop offset=".55" stop-color="#3b6a42"></stop><stop offset=".7" stop-color="#37603a"></stop><stop offset=".85" stop-color="#3e6c3c"></stop><stop offset="1" stop-color="#3a6a38"></stop>
        </linearGradient>
        <linearGradient id="bar" x1="0" y1="0" x2="0" y2="1">
          <stop offset="0" stop-color="#2424c4"></stop><stop offset=".08" stop-color="#4040ee"></stop><stop offset=".35" stop-color="#4646f4"></stop>
          <stop offset=".4" stop-color="#3a3aec"></stop><stop offset=".6" stop-color="#3030e6"></stop><stop offset=".8" stop-color="#16168a"></stop><stop offset="1" stop-color="#0b0b48"></stop>
        </linearGradient>
        <linearGradient id="band" gradientUnits="userSpaceOnUse" x1="600" y1="320" x2="400" y2="540">
          <stop offset="0" stop-color="#8ef58e"></stop><stop offset=".4" stop-color="#7fdc7c"></stop><stop offset=".65" stop-color="#4c8a4a"></stop><stop offset="1" stop-color="#3c6a3c"></stop>
        </linearGradient>
        <linearGradient id="hook" gradientUnits="userSpaceOnUse" x1="580" y1="330" x2="430" y2="600">
          <stop offset="0" stop-color="#3c3cf0"></stop><stop offset=".5" stop-color="#2a2ad8"></stop><stop offset=".75" stop-color="#1c1ca0"></stop><stop offset="1" stop-color="#2424d4"></stop>
        </linearGradient>
        <linearGradient id="endGreen" x1="0" y1="1" x2="1" y2="0"><stop offset="0" stop-color="#4f9a55"></stop><stop offset="1" stop-color="#a0f5a4"></stop></linearGradient>
        <clipPath id="rim"><ellipse cx="630" cy="674" rx="121.600" ry="59.500" transform="rotate(23.500 630 674)"></ellipse></clipPath>
        <filter id="soft"><feGaussianBlur stdDeviation="3"></feGaussianBlur></filter>
        <clipPath id="hookClip"><path d=${outer + "Q505 610 507 603L508 567Q506 558 500 559C475 558 443 542 442 515C441 480 455 450 480 420C505 395 550 366 600 363L619 352V330L612 320Z"}></path></clipPath>
      </defs>

      <!-- straight handle -->
      <rect x="600" y="313" width="620" height="50" fill="url(#bar)"></rect>
      <path d="M600 313.500H1218M600 331.500H1218" stroke="#161680" fill="none" stroke-width="1.500"></path>
      <path d="M600 354H1218" stroke="#08082c" fill="none"></path>
      <path d="M600 363.500H1218" stroke="#08082c" stroke-width="1.500" fill="none"></path>

      <!-- left hook -->
      <g clip-path="url(#hookClip)">
        <rect x="380" y="300" width="250" height="320" fill="url(#hook)"></rect>
        <path d="M600 357C540 362 500 386 472 416C446 446 437 480 436 512C437 535 452 552 470 560" fill="none" stroke="#0c0c5c" stroke-width="9" filter="url(#soft)"></path>
        <path d="M412 470C408 530 424 570 470 602" fill="none" stroke="#0a0a60" stroke-width="14" filter="url(#soft)"></path>
        <path d="M610 340C560 342 510 366 475 400" fill="none" stroke="#8686ff" stroke-width="5" filter="url(#soft)"></path>
        <path d="M438 515C445 550 475 575 508 576V596L470 590C445 575 436 545 438 515z" fill="#2c2cec"></path>
      </g>
      <path d="M598 316L618 332C585 336 550 346 520 362C480 385 448 422 430 450C414 478 405 510 406 530Q408 552 413 567C398 550 394 530 395 514C396 490 402 466 414 438C430 410 455 380 492 354C525 333 560 317 598 316z" fill="url(#band)"></path>
      <path d="M618 332C585 336 550 346 520 362C480 385 448 422 430 450C414 478 405 510 406 530Q408 552 413 567C398 550 394 530 395 514C396 490 402 466 414 438C430 410 455 380 492 354C525 333 560 317 598 316" fill="none" stroke="#d8f5dc" stroke-width="1.500"></path>
      <path d="M598 316L618 332C585 336 550 346 520 362C480 385 448 422 430 450C414 478 405 510 406 530Q408 552 413 567C398 550 394 530 395 514C396 490 402 466 414 438C430 410 455 380 492 354C525 333 560 317 598 316z" fill="none" stroke="#20302a" stroke-width="1.600" stroke-dasharray="9 4"></path>
      <path d="M612 323C560 326 525 340 500 357C460 386 435 420 421 443C405 475 398 500 399 515Q401 540 408 556" fill="none" stroke="#143a14" stroke-width="1.800"></path>
      <path d=${outer} fill="none" stroke="#1d1d70" stroke-width="1.300"></path>
      <path d="M600 363C550 366 505 395 480 420C455 450 441 480 442 515C443 542 475 558 500 559" fill="none" stroke="#d5e6d0" stroke-width="2"></path>
      <path d="M600 364C550 367 506 396 481 421C456 451 442 481 443 515C444 542 475 558 500 558" fill="none" stroke="#223322" stroke-width="1" stroke-dasharray="3 2"></path>
      <path d="M443 530C450 548 470 558 487 558L503 558Q508 562 508 574C480 573 455 560 443 530z" fill="url(#endGreen)" stroke="#1c301c"></path>
      <path d="M594 363L590 350C560 352 525 364 497 380C465 405 440 440 434 460C428 485 428 505 435 520Q440 533 450 541" fill="none" stroke="#c9c9f8" stroke-width="2.500"></path>
      <path d="M416 572Q430 585 450 588L483 593L493 608C465 606 440 596 416 572M430 584Q450 598 486 600" fill="none" stroke="#e4e4fa" stroke-width="2"></path>
      <path d="M428 525C430 560 445 580 462 590L506 598" fill="none" stroke="#18186c"></path>
      <path d="M508 566V601Q504 612 496 610" fill="none" stroke="#10104c" stroke-width="1.500"></path>
      <path d="M598 315Q618 320 619 336T602 363" fill="none" stroke="#1a1a5a" stroke-width="1.200"></path>

      <!-- right hook -->
      <path d="M850 560L862 560C900 556 925 542 946 524V582C920 598 890 606 850 608L831 582Q834 570 850 560z" fill="#2f2fe4"></path>
      <path d="M831 578Q834 566 850 560L862 562Q856 578 860 590Q842 592 831 582z" fill="#18187c" stroke="#08082c"></path>
      <path d="M848 572Q858 574 858 588Q842 592 836 584z" fill="#3c3cf4"></path>
      <path d="M860 560C900 554 925 542 946 524V545C925 560 895 568 860 572z" fill="#8bd993" stroke="#18301c"></path>
      <path d="M850 559L858 557M860 560C900 554 925 542 946 524" fill="none" stroke="#111" stroke-width="2" stroke-dasharray="5 3"></path>
      <path d="M860 590C895 586 923 574 946 558M862 598C900 592 926 580 946 568" fill="none" stroke="#d8d8fa" stroke-width="2"></path>
      <path d="M856 604C895 600 922 590 946 577" fill="none" stroke="#0b0b48" stroke-width="4"></path>
      <path d="M834 591L858 590L860 601L849 608z" fill="#86e08a" stroke="#152a15"></path>
      <path d="M838 598L858 594" stroke="#152a15"></path>

      <!-- ring -->
      <path d="M518.500 625.700L741.500 722.300L710.500 794.300L487.500 697.700z" fill="url(#wallOut)"></path>
      <ellipse cx="599" cy="746" rx="121.600" ry="59.500" transform="rotate(23.500 599 746)" fill="url(#wallOut)" stroke="#26382a" stroke-width="2"></ellipse>
      <path d="M518.500 625.700L487.500 697.700L532 673zM741.500 722.300L710.500 794.300L697 746z" fill="#417c3d"></path>
      <ellipse cx="630" cy="674" rx="121.600" ry="59.500" transform="rotate(23.500 630 674)" fill="url(#wallIn)"></ellipse>
      <g clip-path="url(#rim)">
        <ellipse cx="599" cy="746" rx="121.600" ry="59.500" transform="rotate(23.500 599 746)" fill="#e5e6ea" stroke="#26382a" stroke-width="2"></ellipse>
      </g>
      <ellipse cx="599" cy="746" rx="121.600" ry="59.500" transform="rotate(23.500 599 746)" fill="none" stroke="#7fc07c" stroke-width="1.500" stroke-dasharray="5 8"></ellipse>
      <ellipse cx="630" cy="674" rx="121.600" ry="59.500" transform="rotate(23.500 630 674)" fill="none" stroke="#26382a" stroke-width="2.500"></ellipse>
      <ellipse cx="630" cy="674" rx="121.600" ry="59.500" transform="rotate(23.500 630 674)" fill="none" stroke="#7fc07c" stroke-width="1.500" stroke-dasharray="5 8"></ellipse>
      <path d="M571 603L540 672M689 748L659 817" stroke="#86c983" stroke-width="1.500"></path>
      <path d="M532 675L502 744M726 676L697 744" stroke="#22302a" stroke-width="2.500"></path>
      <path d="M728 678L699 745" stroke="#b9dcb6"></path>
      <path d="M530 674C510 674 490 686 486 702M698 748C708 760 714 775 712 788" fill="none" stroke="#cfe0cc" stroke-width="2.500"></path>

      <!-- datum and work coordinate systems -->
      <g fill="none" stroke="#cc9390" stroke-width="1.500">
        <path d="M727 461L757 391M727 461H794M727 461L765 508M750 390L768 366L764 396zM750 390Q756 386 764 396M796 454L822 461L796 468zM796 454Q786 461 796 468M762 512L784 533L776 507zM762 512Q766 502 776 507"></path>
        <path d="M755 496H803M770 476L790 496" stroke-dasharray="7 5"></path>
      </g>
      <path d="M752 412H795L776 460" fill="none" stroke="#e8711c" stroke-width="2" stroke-dasharray="7 5"></path>
      <path d="M758 424L772 452" fill="none" stroke="#e0905c" stroke-dasharray="6 5"></path>
      <path d="M727 461L741 424" stroke="#28c828" stroke-width="2"></path>
      <path d="M727 461H766" stroke="#c02020" stroke-width="2"></path>
      <path d="M727 461L746 487" stroke="#2020a8" stroke-width="2"></path>
      <g font-family="Liberation Sans, sans-serif" font-size="10" fill="#d08a86">
        <text x="770" y="360" fill="#e8eef4">Y</text><text x="826" y="460">X</text><text x="787" y="537">Z</text>
        <g fill="#e8711c"><text x="744" y="422">YC</text><text x="764" y="461">XC</text><text x="749" y="490">ZC</text></g>
      </g>
      <path d="M329 849L342 822" stroke="#22b08a" stroke-width="1.800"></path>
      <path d="M329 849H357" stroke="#e04848" stroke-width="1.800"></path>
      <path d="M329 849L347 870" stroke="#2f4ad0" stroke-width="1.800"></path>
      <circle cx="329" cy="849" r="3.500" fill="#9aa0a4"></circle>
      <g font-family="Liberation Sans, sans-serif" font-size="9">
        <text x="342" y="819" fill="#22b08a">Y</text><text x="362" y="853" fill="#e04848">X</text><text x="348" y="878" fill="#2f4ad0">Z</text>
      </g>
    </svg>`;
  }
}

@customElement("nx-navigator")
class NxNavigator extends LitElement {
  static styles = [shared, css`
    :host { display: flex; flex-direction: column; width: 235px; flex: none; background: #ededed; border-left: 1px solid #fff; padding: 5px 9px 5px 6px; border-right: 3px solid #77777b; }
    .head { display: flex; align-items: center; gap: 8px; height: 22px; margin-bottom: 4px; flex: none; }
    .head .icon { margin: 0 0 0 3px; }
    h2 { margin: 0; flex: 1; height: 22px; padding-left: 5px; font-size: 12px; line-height: 22px; font-weight: 900; background: linear-gradient(#fafafa, #d8dadb); border-bottom: 1px solid #888; border-right: 1px solid #999; }
    .box { flex: 1; min-height: 0; display: flex; flex-direction: column; border: 2px solid #5c6070; border-right-width: 1px; background: #fff; }
    .rows { flex: 1; min-height: 0; overflow: hidden; background: linear-gradient(90deg, transparent 198px, #d9d9d9 198px, #d9d9d9 199px, transparent 199px), repeating-linear-gradient(#fff 0 19px, #e6e6e6 19px 20px, #f7f7f7 20px 39px, #e6e6e6 39px 40px) 0 15px; }
    table { width: 100%; table-layout: fixed; border-collapse: collapse; font-size: 12px; }
    .c2 { width: 14px; }
    th { height: 15px; line-height: 15px; padding: 0 0 0 5px; text-align: left; font-weight: 400; font-size: 11px; background: linear-gradient(#f4f4f4, #dcdfe0); color: #333; overflow: hidden; white-space: nowrap; }
    th + th { border-left: 1px solid #999; }
    .sort { display: inline-block; margin-left: 11px; border: 5px solid transparent; border-bottom: 6px solid #111; border-top: 0; vertical-align: 1px; }
    td { padding: 0; height: 20px; color: #555; }
    .node { display: flex; align-items: center; height: 20px; line-height: 19px; white-space: nowrap; }
    .l1 { padding-left: 3px; }
    .l2 { padding-left: 29px; background: linear-gradient(#bbb, #bbb) 28px 0 / 1px 100% no-repeat; }
    .exp { width: 9px; height: 9px; border: 1px solid #555; border-radius: 2px; background: linear-gradient(#333, #333) center / 5px 1px no-repeat #fff; flex: none; }
    .plus { background: linear-gradient(#333, #333) center / 5px 1px no-repeat, linear-gradient(#333, #333) center / 1px 5px no-repeat, #fff; }
    .none { visibility: hidden; }
    .stub { width: 6px; border-top: 1px dotted #999; flex: none; }
    .l2 .stub { width: 10px; }
    .name { padding-left: 3px; flex: 1; }
    .tickbox { appearance: none; flex: none; width: 13px; height: 13px; margin: 0 1px 0 0; border: 1px solid #222; background: #fff; display: grid; place-items: center; }
    .tickbox:checked::after { content: ""; width: 11px; height: 10px; background: #2bb045; clip-path: polygon(0 45%, 22% 34%, 38% 56%, 86% 0, 100% 12%, 40% 100%); }
    .sel .name { background: #363c56; color: #fff; }
    .sel td + td { background: #363c56; border-left: 1px solid #ddd; }
    .scroll { display: flex; gap: 1px; height: 18px; flex: none; background: #f8f8f2; }
    .scroll button { width: 16px; color: #1d3f8a; background: linear-gradient(#dfe8fb, #b3c6f2); border: 1px solid #9ab0dc; display: grid; place-items: center; }
    .thumb { width: 127px; border: 1px solid #7d93c6; background: repeating-linear-gradient(90deg, #7a8dbb 0 1px, transparent 1px 2px) center / 8px 7px no-repeat, linear-gradient(#d9e3f8, #b4c4e8); }
    .space { flex: 1; }
    .split { height: 11px; flex: none; display: flex; align-items: center; gap: 5px; }
    .split::before, .split::after { content: ""; flex: 1; border-top: 1px solid #bbb; }
    .split .knob { width: 36px; height: 5px; background: #ccc; border-bottom: 1px solid #777; border-right: 1px solid #777; }
    .group { display: flex; align-items: center; height: 22px; width: 100%; flex: none; padding-left: 6px; font-size: 12px; font-weight: 900; text-align: left; background: linear-gradient(#f8f8f8, #e9e9e9 50%, #d5d7d8); border-bottom: 1px solid #888; border-right: 1px solid #999; }
    .group .lbl { flex: 1; }
    .group .chev { height: 21px; width: 21px; border-left: 1px solid #999; display: grid; place-items: center; }
  `];
  private node(cls: string, exp: string, icons: string[], text: string) {
    return html`<tr><td><div class="node ${cls}"><span class="exp ${exp}"></span><span class="stub"></span>
      ${icons.map((n) => icon(n, 16))}<span class="name">${mixed(text)}</span></div></td><td></td></tr>`;
  }
  private item(ic: string, text: string, sel = false) {
    return html`<tr class=${sel ? "sel" : ""}><td><div class="node l2"><span class="stub"></span>
      <input class="tickbox" type="checkbox" checked aria-label=${text}>${icon(ic, 16)}<span class="name">${mixed(text)}</span></div></td><td></td></tr>`;
  }
  render() {
    return html`
      <div class="head">${icon("pin", 12)}<h2>部件导航器</h2></div>
      <div class="box">
        <div class="rows"><table>
          <colgroup><col><col class="c2"></colgroup>
          <thead><tr><th>名称 <span class="sort"></span></th><th>附</th></tr></thead>
          <tbody>
            ${this.node("l1", "none", ["clock"], "History Mode")}
            ${this.node("l1", "plus", ["views"], "模型视图")}
            ${this.node("l1", "plus", ["okay", "cam"], "摄像机")}
            ${this.node("l1", "", ["folder"], "模型历史记录")}
            ${Array.from({ length: 22 }, (_, i) => this.item("body", `体 (${i})`))}
            ${this.item("datum", "基准坐标系 (22)", true)}
          </tbody></table></div>
        <div class="scroll">
          <button aria-label="向左"><svg width="8" height="8" viewBox="0 0 8 8">${s("M6 0L2 4l4 4", "#1d3f8a", 2)}</svg></button>
          <div class="thumb"></div><div class="space"></div>
          <button aria-label="向右"><svg width="8" height="8" viewBox="0 0 8 8">${s("M2 0l4 4-4 4", "#1d3f8a", 2)}</svg></button>
        </div>
      </div>
      <div class="split"><span class="knob"></span></div>
      ${["相关性", "细节", "预览"].map((t) => html`<button class="group"><span class="lbl">${t}</span>
        <span class="chev"><svg width="12" height="10" viewBox="0 0 12 10">${s("M1 1l5 7 5-7", "#555", 2.200)}</svg></span></button>`)}`;
  }
}

@customElement("nx-dialog")
class NxDialog extends LitElement {
  static styles = [shared, css`
    :host { display: block; font-size: 12px; color: #111; }
    .bar { display: flex; margin-left: 117px; height: 19px; }
    .bar button, .bar strong { display: grid; place-items: center; width: 19px; background: linear-gradient(#4a4a4a, #0d0d0d 55%); border-right: 1px solid #aaa; }
    .bar strong { width: 53px; color: #fff; font-weight: 700; font-size: 13px; line-height: 18px; }
    .bar .side { width: 17px; background: #e4e4e4; }
    .panel { background: #ececec; padding: 7px 2px 11px 6px; border-left: 1px solid #fff; border-bottom: 7px solid #181a1a; border-bottom-left-radius: 6px; }
    .group { display: flex; width: 100%; height: 23px; align-items: center; padding-left: 6px; font-weight: 900; text-align: left; background: linear-gradient(#fdfdfd, #efefef 50%, #dcdedd); border-bottom: 2px solid #8c8c8c; }
    .group .lbl { flex: 1; }
    .chev { width: 22px; height: 21px; display: grid; place-items: center; border-left: 1px solid #aaa; }
    .body { background: #d2d2d2; border-left: 1px solid #999; border-right: 1px solid #999; padding: 7px 8px 7px 7px; min-height: 46px; display: flex; flex-direction: column; justify-content: center; }
    .line { display: flex; align-items: center; gap: 4px; height: 31px; }
    .on { background: linear-gradient(90deg, #e2a468, #dfae80 35%, #d2d2d2 90%); border-radius: 5px 0 0 5px; }
    .grow { flex: 1; }
    .tall { min-height: 54px; padding-bottom: 15px; }
    .big { display: grid; place-items: center; width: 31px; height: 31px; border: 2px solid #7d7f86; border-radius: 4px; background: linear-gradient(#fafafa, #d5d5d5); }
    .warm { border-color: #9b6a4a; background: linear-gradient(#fbe8da, #f2a66a); }
    .mid { display: grid; place-items: center; width: 23px; height: 23px; border: 2px solid #9b6a4a; border-radius: 4px; background: linear-gradient(#fbd9bf, #f2a66a); }
    .off { border: 1px solid #bbb; background: #e2e2e2; }
    .pick { width: 15px; height: 23px; display: grid; place-items: center; border: 1px solid #555; border-radius: 4px; background: linear-gradient(#fff, #cfcfcf); margin-left: 3px; }
    .pick::after { content: ""; border: 3px solid transparent; border-top: 3px solid #111; border-bottom: 0; }
    .opts { padding: 5px 8px 6px 7px; display: block; }
    .opt { display: flex; align-items: center; gap: 1px; height: 22px; white-space: nowrap; }
    .chk { appearance: none; width: 16px; height: 16px; margin: 0; border: 1px solid #666; border-radius: 2px; background: linear-gradient(#f4f4f4, #d2d2d2); display: grid; place-items: center; }
    .chk:checked { background: linear-gradient(#c8ecfd, #6fc0ee); border-color: #2c6a9a; }
    .chk:checked::after { content: ""; width: 11px; height: 10px; background: #14386a; clip-path: polygon(0 45%, 15% 32%, 38% 60%, 88% 0, 100% 14%, 40% 100%); }
    .num { width: 64px; height: 18px; border: 2px solid #555; border-radius: 3px; outline: 1px solid #fff; outline-offset: -3px; background: #363c56; color: #fff; font: 12px "Liberation Mono", monospace; padding: 0 0 0 14px; }
    .foot { display: flex; justify-content: flex-end; gap: 7px; margin-top: 3px; padding: 5px 10px 0 0; border-top: 1px solid #aaa; }
    .act { width: 52px; height: 20px; line-height: 16px; border: 2px solid #7a7a7a; border-radius: 4px; background: linear-gradient(#fdfdfd, #e4e4e4 50%, #cdcdcd 52%, #e6e6e6); }
    .ok { background: linear-gradient(#c4f5b4, #8be077 50%, #66cc55 52%, #a6ee94); border-color: #4c6e48; }
  `];
  private head(t: string) {
    return html`<button class="group"><span class="lbl">${t}</span>
      <span class="chev"><svg width="12" height="10" viewBox="0 0 12 10">${s("M1 9l5-7 5 7", "#666", 2.200)}</svg></span></button>`;
  }
  render() {
    const b = (label: string, d: string, side = false) => html`<button class=${side ? "side" : ""} aria-label=${label}>
      <svg width="12" height="12" viewBox="0 0 12 12">${s(d, side ? "#555" : "#fff", 2.400)}</svg></button>`;
    return html`
      <div class="bar">${b("上一个", "M10 1L3 6l7 5", true)}${b("移动", "M1 1l9 9M10 4v6H4")}<strong>分割面</strong>
        ${b("重置", "M6 1c6 1 5 9 0 9-2 0-3 0-5-1")}${b("最小化", "M1 4h10")}${b("关闭", "M1 1l10 10M11 1L1 11")}${b("下一个", "M2 1l7 5-7 5", true)}</div>
      <div class="panel">
        ${this.head("要分割的面")}
        <div class="body"><div class="line">${icon("okay", 14)}<span class="grow">选择面 (6)</span><button class="big" aria-label="面">${icon("fcube", 26)}</button></div></div>
        ${this.head("分割对象")}
        <div class="body"><div class="line on">${icon("okay", 14)}<span class="grow">选择对象 (1)</span><button class="big warm" aria-label="对象">${icon("split", 26)}</button></div></div>
        ${this.head("投影方向")}
        <div class="body tall"><div class="line"><span class="grow">投影方向</span>
          <button class="mid" aria-label="矢量构造器">${icon("dir")}</button><button class="mid off" aria-label="面法向">${icon("vecG")}</button>
          ${icon("up", 22)}<button class="pick" aria-label="选择方向"></button></div></div>
        ${this.head("设置")}
        <div class="body opts">
          <label class="opt"><input class="chk" type="checkbox">隐藏分割对象</label>
          <label class="opt"><input class="chk" type="checkbox">不要对面上的曲线进行投影</label>
          <label class="opt"><span class="grow">公差</span><input class="num" value="0.02540"></label>
        </div>
        ${this.head("预览")}
        <div class="body"><div class="line"><label class="opt grow"><input class="chk" type="checkbox" checked>预览</label>
          <span>显示结果</span><button class="big" aria-label="显示结果">${icon("mag", 24)}</button></div></div>
        <div class="foot"><button class="act ok">确定</button><button class="act">应用</button><button class="act">取消</button></div>
      </div>`;
  }
}

const MENUS: [string, string][] = [["文件", "F"], ["编辑", "E"], ["视图", "V"], ["插入", "S"], ["格式", "R"], ["工具", "T"],
  ["装配", "A"], ["信息", "I"], ["分析", "L"], ["首选项", "P"], ["窗口", "O"], ["帮助", "H"]];

@customElement("app-root")
class AppRoot extends LitElement {
  static styles = [shared, css`
    :host { display: flex; flex-direction: column; height: 100vh; overflow: hidden; font: 12px/16px "Liberation Sans", "Noto Sans CJK SC", sans-serif; color: #222; background: #d4d4d4; }
    .title { display: flex; align-items: center; gap: 3px; height: 26px; flex: none; padding: 0 0 0 2px; color: #fff; background: linear-gradient(#a0a0a0 0 1px, #777 2px, #484848 8px, #1b1b1b 8px); }
    h1 { margin: 0; flex: 1; font: 700 13px/24px "Noto Sans", "Noto Sans CJK SC", sans-serif; white-space: pre; }
    .cn { font-size: 16px; }
    .brand { font: 700 15px/26px "Noto Sans", sans-serif; margin-right: 27px; }
    .min { width: 10px; height: 20px; margin-bottom: 5px; border: 1px solid #999; border-right: 0; border-radius: 4px 0 0 4px; background: #444; display: grid; place-items: center end; }
    .min::after { content: ""; width: 6px; height: 3px; background: #fff; }
    .menu { display: flex; align-items: center; height: 23px; flex: none; gap: 11px; background: #e6e6e6; padding-left: 3px; }
    .menu .logo { display: flex; align-items: center; gap: 1px; margin-right: -6px; }
    .dots { width: 3px; height: 16px; background: radial-gradient(circle, #999 1px, transparent 1px) 0 0 / 3px 4px; }
    .menu a { color: #333; text-decoration: none; white-space: nowrap; }
    u { text-underline-offset: 2px; }
    .bars { flex: none; background: #d6d6d6; }
    .row { display: flex; height: 26px; align-items: center; background: linear-gradient(#dedede, #cfcfcf); border-bottom: 1px solid #bcbcbc; border-top: 1px solid #f0f0f0; overflow: hidden; }
    .row .dots { margin-left: 3px; flex: none; }
    .start { display: flex; align-items: center; width: 58px; height: 22px; flex: none; gap: 2px; padding-left: 3px; white-space: nowrap; }
    .start::after { content: ""; border: 3px solid transparent; border-top: 4px solid #111; border-bottom: 0; margin-left: 1px; }
    .ledge { height: 15px; flex: none; background: linear-gradient(#c9c9c9 0 4px, #999 4px 5px, #dedede 5px 9px, #8a8a8a 9px 10px, #c9c9c9 10px 13px, #7a6a60 13px); }
    .main { display: flex; flex: 1; min-height: 0; position: relative; }
    .tabs { width: 27px; flex: none; background: linear-gradient(90deg, #b5b5b5, #a4a4a4); padding: 16px 0 0 5px; display: flex; flex-direction: column; gap: 2px; }
    .tab { height: 32px; display: grid; place-items: center; border: 2px solid #777; border-right: 0; border-radius: 4px 0 0 4px; background: linear-gradient(90deg, #d9d9d9, #c8c8c8); }
    .cur { background: #ededed; border-color: #999; margin-left: -2px; }
    .far { margin-top: 12px; }
    .view { flex: 1; min-width: 0; position: relative; border-left: 2px solid #c0713c; border-top: 2px solid #b0785a; border-bottom: 1px solid #c0713c; background: linear-gradient(#98c0e0, #b4cfe2 30%, #d3dce6 58%, #e6e6e9 74%, #e9e9e9); }
    .note { position: absolute; left: 1px; top: 0; width: 184px; height: 45px; padding-top: 1px; background: #fff; font: 20px/19px "Liberation Mono", "Noto Sans CJK SC", monospace; color: #111; white-space: nowrap; }
    .note .lat { font-size: 16px; }
    .cam { position: absolute; left: 3px; bottom: 0; font: 600 14px/18px "Open Sans", sans-serif; color: #d3691e; }
    .dialog { position: absolute; right: 0; top: -15px; width: 276px; z-index: 2; }
    .low { height: 27px; border-top-color: #fff; }
    .sels { height: 27px; gap: 0; padding-left: 4px; }
    .combo { display: grid; height: 17px; flex: none; }
    .combo select { grid-area: 1 / 1; appearance: none; width: 100%; height: 17px; border: 1px solid #555; border-radius: 3px; background: #fff; padding: 0 18px 0 2px; font: 11px/14px "Noto Sans CJK SC", sans-serif; color: #222; }
    .combo .arr { grid-area: 1 / 1; justify-self: end; width: 17px; margin: 1px; border-radius: 0 3px 3px 0; background: linear-gradient(#bfe2f8, #4f9fd8); display: grid; place-items: center; pointer-events: none; }
    .arr::after { content: ""; border: 5px solid transparent; border-top: 6px solid #10202e; border-bottom: 0; }
    .w1 { width: 111px; margin-right: 8px; }
    .w2 { width: 117px; }
    .w3 { width: 118px; margin: 0 3px 0 4px; }
  `];
  private combo(cls: string, label: string, value: string) {
    return html`<label class="combo ${cls}"><select aria-label=${label}><option>${value}</option></select><span class="arr"></span></label>`;
  }
  render() {
    const tabs = ["tabTree", "tabPart", "tabHist", "tabWeb", "clock", "tabDoc", "tabCol", "tabTool", "tabUser", "tabPic", "tabSys"];
    return html`
      <header class="title">${icon("nx", 17)}<h1>NX 6 - Modeling - [banshou.prt <span class="cn">（修改的）</span> ]</h1>
        <span class="brand">SIEMENS</span><button class="min" aria-label="最小化"></button></header>
      <nav class="menu"><span class="logo"><span class="dots"></span>${icon("nxs", 17)}</span>
        ${MENUS.map(([t, k]) => html`<a href="#">${t}<span class="lat">(<u>${k}</u>)</span></a>`)}</nav>
      <div class="bars">
        <div class="row"><span class="dots"></span><button class="start">${icon("nx")}开始</button>
          <nx-toolbar items="new open save | cut copy paste | undo redo | info | find ; : fit gray zoomfit zoom rotate pan persp | cubeB > cubeB solid wire wire2 yin section > square > | clip1 clip2 clip3 ; : *csysSet csysDots csys csysRot csysDir csysRgb ball play eye1 eyePtr eye2 eye3 | measure angle ; |"></nx-toolbar></div>
        <div class="row"><span class="dots"></span>
          <nx-toolbar items="sketch | extrude revolve sweep tube pipe | cubeY cubeY2 disk cubeO cyl corner | pad cubes slab trap band hook | cubeS cylL cone sphere ; : line arc circs circl wave studio scurve letter plus points fillet rect poly | ellipse parab hyper helix coil xyz offset joint > proj inter inter tower > layers doc more"></nx-toolbar></div>
        <div class="row"><span class="dots"></span>
          <nx-toolbar items="boolean > plane > | disc orb | block horn horn boxT clamp rings crossO crossB book shell cols pill mark disc2 | brick ghost | cubeN tree ; : key trim tick bend fillet sheet stair spin ; : greens ; : sf1 sf2 sf3 diamond loops patch net broom | roll wing stack posts roof dune | gold blueS"></nx-toolbar></div>
      </div>
      <div class="ledge"></div>
      <main class="main">
        <div class="tabs">${tabs.map((t, i) => html`<button class=${classMap({ tab: true, cur: i === 1, far: i === 3 || i === 4 })} aria-label=${t}>${icon(t, 17)}</button>`)}</div>
        <nx-navigator></nx-navigator>
        <section class="view"><nx-scene></nx-scene>
          <div class="note">${mixed("01 将图中6个面用xy")}<br>平面分割</div>
          <div class="cam">TOP WORK Camera TOP</div>
        </section>
        <nx-dialog class="dialog"></nx-dialog>
      </main>
      <div class="row low"><span class="dots"></span>
        <nx-toolbar items="as1 as2 as3 as4 as5 asG | asPlus asPlus asDots asFlat asMove mate cons savem mir wav wr gq | blobs chain | shield grayD link hexo linki node | check ; |"></nx-toolbar></div>
      <div class="row sels">
        ${this.combo("w1", "类型过滤器", "没有选择过滤器")}${this.combo("w2", "选择范围", "仅在工作部件内部")}
        <nx-toolbar items="gearG | snap > ret *eraser curl hookG | marq > |"></nx-toolbar>
        ${this.combo("w3", "面规则", "相切面")}${this.combo("w3", "曲线规则", "相连曲线")}
        <nx-toolbar items="hash hashY noent | cubeB"></nx-toolbar></div>`;
  }
}
